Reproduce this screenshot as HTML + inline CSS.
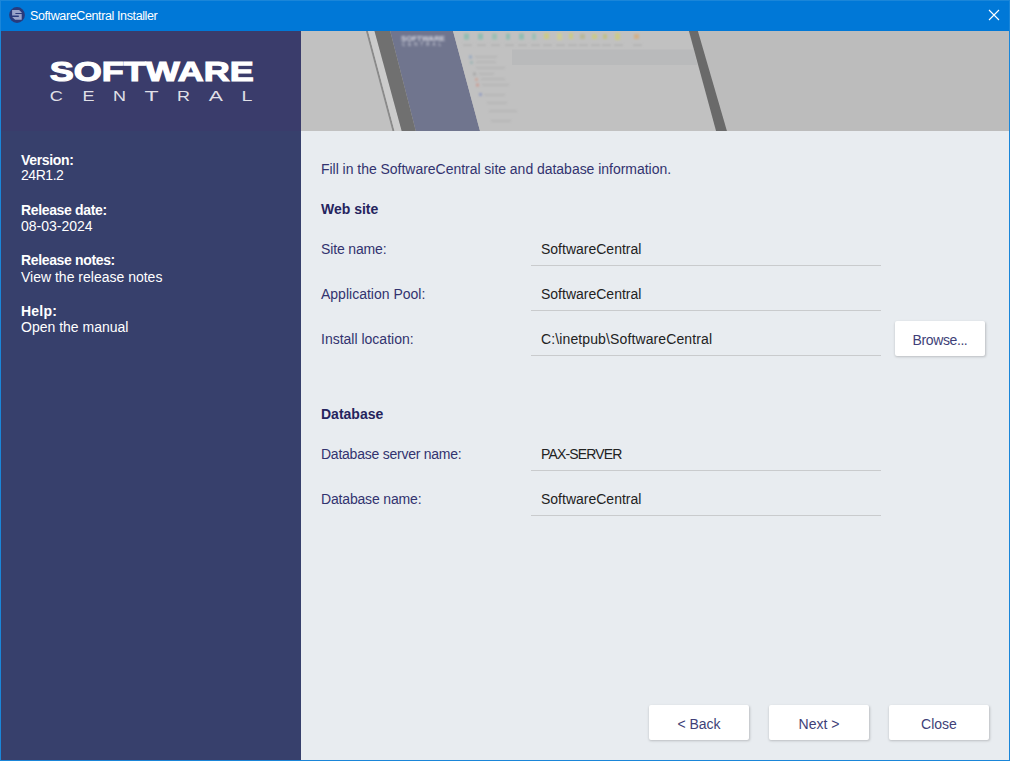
<!DOCTYPE html>
<html><head><meta charset="utf-8">
<style>
*{margin:0;padding:0;box-sizing:border-box}
html,body{width:1010px;height:761px;overflow:hidden;background:#e8ecf0}
body{position:relative;font-family:"Liberation Sans",sans-serif}
.abs{position:absolute;white-space:nowrap}
#title{position:absolute;left:0;top:0;width:1010px;height:31px;background:#0078d7}
#side{position:absolute;left:0;top:31px;width:301px;height:730px;background:#37406c}
#sidetop{position:absolute;left:0;top:31px;width:301px;height:100px;background:#3a3c6b}
#hdr{position:absolute;left:301px;top:31px;width:709px;height:100px;background:#bcbcbc;overflow:hidden}
#content{position:absolute;left:301px;top:131px;width:709px;height:630px;background:#e8ecf0}
.bl{font-size:14px;font-weight:bold;color:#fff;letter-spacing:-0.35px}
.vl{font-size:14px;color:#fff}
.lab{font-size:14px;color:#32336f}
.head{font-size:14px;font-weight:bold;color:#25245e}
.inp{font-size:14px;color:#222}
.ul{position:absolute;left:531px;width:350px;height:1px;background:#c9cbcd}
.btn{position:absolute;background:#fff;border-radius:2px;box-shadow:0.5px 1px 2.5px rgba(0,0,0,0.2);font-size:14px;color:#403f78;text-align:center;line-height:35px;height:35px;padding-top:1.5px}
#bord{position:absolute;left:0;top:0;width:1010px;height:761px;border:1px solid #1a86d9;pointer-events:none}
</style></head><body>
<div id="title"></div>
<svg class="abs" style="left:9px;top:7px" width="16" height="16" viewBox="0 0 16 16">
  <circle cx="8" cy="8" r="7.9" fill="#283a7c"/>
  <path d="M3.1,3 H10.1 L12.7,5.6 V5.9 H6.4 V6.9 H12.7 V12.7 H6.1 L3.1,10.1 H9.8 V8.5 H3.1 Z" fill="#98a3c9"/>
</svg>
<div class="abs" style="left:30px;top:9px;font-size:12.5px;letter-spacing:-0.38px;color:#fff">SoftwareCentral Installer</div>
<svg class="abs" style="left:988px;top:9px" width="12" height="12" viewBox="0 0 12 12">
  <path d="M1 1L11 11M11 1L1 11" stroke="#fff" stroke-width="1.1"/>
</svg>

<div id="side"></div>
<div id="sidetop"></div>
<svg class="abs" style="left:0;top:0" width="301" height="131" viewBox="0 0 301 131">
<text x="49.8" y="81.3" font-family="Liberation Sans" font-weight="bold" font-size="27" fill="#fff" stroke="#fff" stroke-width="1.1" stroke-linejoin="miter" textLength="204" lengthAdjust="spacingAndGlyphs">SOFTWARE</text>
<g font-family="Liberation Sans" font-size="14.2" fill="#fff" fill-opacity="0.85"><text x="49.8" y="100.5" textLength="13.1" lengthAdjust="spacingAndGlyphs">C</text><text x="82.5" y="100.5" textLength="12.0" lengthAdjust="spacingAndGlyphs">E</text><text x="113.0" y="100.5" textLength="13.0" lengthAdjust="spacingAndGlyphs">N</text><text x="144.6" y="100.5" textLength="14.1" lengthAdjust="spacingAndGlyphs">T</text><text x="177.0" y="100.5" textLength="13.0" lengthAdjust="spacingAndGlyphs">R</text><text x="208.8" y="100.5" textLength="14.2" lengthAdjust="spacingAndGlyphs">A</text><text x="241.5" y="100.5" textLength="10.9" lengthAdjust="spacingAndGlyphs">L</text></g>
</svg>
<div class="abs bl" style="left:21px;top:152px">Version:</div>
<div class="abs vl" style="left:21px;top:167px;letter-spacing:-0.45px">24R1.2</div>
<div class="abs bl" style="left:21px;top:202px">Release date:</div>
<div class="abs vl" style="left:21px;top:218px">08-03-2024</div>
<div class="abs bl" style="left:21px;top:251.5px">Release notes:</div>
<div class="abs vl" style="left:21px;top:269px">View the release notes</div>
<div class="abs bl" style="left:21px;top:302.5px;letter-spacing:0.2px">Help:</div>
<div class="abs vl" style="left:21px;top:318.5px">Open the manual</div>

<div id="hdr"><svg width="709" height="100" viewBox="0 0 709 100">
<defs><filter id="bl" x="-20%" y="-20%" width="140%" height="140%"><feGaussianBlur stdDeviation="1"/></filter>
<filter id="bl2" x="-5%" y="-5%" width="110%" height="110%"><feGaussianBlur stdDeviation="0.7"/></filter></defs>
<rect width="709" height="100" fill="#bcbcbc"/>
<g filter="url(#bl2)">
<polygon points="0,0 65,0 91.5,100 0,100" fill="#c1c1c1"/>
<polygon points="65,0 67,0 93.5,100 91.5,100" fill="#8a8a8a"/>
<polygon points="67,0 73.5,0 100.7,100 93.5,100" fill="#cbcbcb"/>
<polygon points="89.2,0 152,0 179,100 114.8,100" fill="#70748e"/>
<polygon points="73.5,0 89.2,0 114.8,100 100.7,100" fill="#6f6f6f"/>
<polygon points="152,0 387.4,0 415.6,100 179,100" fill="#c1c1c1"/>
<polygon points="211,18.5 392.5,18.5 396.5,34 211,34" fill="#b9babb"/>
<polygon points="387.4,-2 396.3,-2 426.5,102 415.6,102" fill="#6a6a6a"/>
</g>
<g filter="url(#bl)" opacity="1">
<rect x="163" y="2.5" width="5" height="6" fill="#93bdb2"/>
<rect x="177" y="2.5" width="5" height="6" fill="#93bdb2"/>
<rect x="191" y="2.5" width="5" height="6" fill="#9cbfb4"/>
<rect x="205" y="2.5" width="4" height="6" fill="#93bdb2"/>
<rect x="218" y="2.5" width="5" height="6" fill="#93bdb2"/>
<rect x="231" y="2.5" width="4" height="6" fill="#9cc0b6"/>
<rect x="243" y="2" width="5" height="6" fill="#c9c98a"/>
<rect x="256" y="2" width="5" height="7" fill="#cdcd98"/>
<rect x="268" y="2" width="4" height="6" fill="#c9c98a"/>
<rect x="279" y="3" width="5" height="5" fill="#b8b89a"/>
<rect x="291" y="3" width="5" height="5" fill="#c9c98a"/>
<rect x="302" y="3" width="4" height="5" fill="#c0c08a"/>
<rect x="314" y="2" width="5" height="7" fill="#c9c98a"/>
<rect x="333" y="3" width="5" height="5" fill="#d0b08a"/>
<rect x="162" y="13.5" width="9" height="1.2" fill="#adadad"/><rect x="176" y="13.5" width="9" height="1.2" fill="#adadad"/><rect x="190" y="13.5" width="9" height="1.2" fill="#adadad"/><rect x="204" y="13.5" width="9" height="1.2" fill="#adadad"/><rect x="217" y="13.5" width="9" height="1.2" fill="#adadad"/><rect x="230" y="13.5" width="9" height="1.2" fill="#adadad"/><rect x="242" y="13.5" width="9" height="1.2" fill="#adadad"/><rect x="255" y="13.5" width="9" height="1.2" fill="#adadad"/><rect x="267" y="13.5" width="9" height="1.2" fill="#adadad"/><rect x="278" y="13.5" width="9" height="1.2" fill="#adadad"/><rect x="290" y="13.5" width="9" height="1.2" fill="#adadad"/><rect x="301" y="13.5" width="9" height="1.2" fill="#adadad"/><rect x="313" y="13.5" width="9" height="1.2" fill="#adadad"/><rect x="332" y="13.5" width="9" height="1.2" fill="#adadad"/>
</g>
<g filter="url(#bl)" fill="#aaaaaa" opacity="0.6">
<rect x="168" y="24.5" width="3" height="3" fill="#7f9ac0"/><rect x="174" y="25" width="22" height="1.5"/>
<rect x="169" y="30" width="3" height="3" fill="#8fb0b0"/><rect x="175" y="30.5" width="20" height="1.5"/>
<rect x="175" y="36" width="29" height="1.5"/>
<rect x="172" y="41.5" width="3" height="3" fill="#999"/><rect x="178" y="42" width="15" height="1.5"/>
<rect x="174" y="47" width="3" height="3" fill="#d09a8a"/><rect x="180" y="47.5" width="24" height="1.5"/>
<rect x="175" y="52.5" width="3" height="3" fill="#d08a7a"/><rect x="181" y="53" width="27" height="1.5"/>
<rect x="178" y="62" width="3" height="3" fill="#7a8ac0"/><rect x="183" y="63" width="21" height="1.5"/>
<rect x="186" y="71" width="20" height="1.5"/>
<rect x="188" y="79.5" width="28" height="1.5"/>
<rect x="190" y="89" width="20" height="1.5"/>
</g>
<g filter="url(#bl)" fill="#d6d7e0">
<text x="100" y="9.6" font-family="Liberation Sans" font-weight="bold" font-size="8" textLength="44" lengthAdjust="spacingAndGlyphs">SOFTWARE</text>
<text x="101" y="14.8" font-family="Liberation Sans" font-size="4.5" textLength="42" lengthAdjust="spacing" letter-spacing="3">CENTRAL</text>
</g>
</svg></div>
<div id="content"></div>

<div class="abs lab" style="left:321px;top:161px;letter-spacing:-0.03px">Fill in the SoftwareCentral site and database information.</div>
<div class="abs head" style="left:321px;top:201px">Web site</div>
<div class="abs lab" style="left:321px;top:241px;letter-spacing:-0.15px">Site name:</div>
<div class="abs lab" style="left:321px;top:286px">Application Pool:</div>
<div class="abs lab" style="left:321px;top:331px">Install location:</div>
<div class="abs inp" style="left:541px;top:241px">SoftwareCentral</div>
<div class="abs inp" style="left:541px;top:286px">SoftwareCentral</div>
<div class="abs inp" style="left:541px;top:331px;letter-spacing:0.12px">C:\inetpub\SoftwareCentral</div>
<div class="ul" style="top:265px"></div>
<div class="ul" style="top:310px"></div>
<div class="ul" style="top:355px"></div>
<div class="btn" style="left:895px;top:321px;width:90px;letter-spacing:-0.4px">Browse...</div>

<div class="abs head" style="left:321px;top:406px">Database</div>
<div class="abs lab" style="left:321px;top:446px;letter-spacing:-0.24px">Database server name:</div>
<div class="abs lab" style="left:321px;top:491px;letter-spacing:-0.17px">Database name:</div>
<div class="abs inp" style="left:541px;top:446px;letter-spacing:-0.85px">PAX-SERVER</div>
<div class="abs inp" style="left:541px;top:491px">SoftwareCentral</div>
<div class="ul" style="top:470px"></div>
<div class="ul" style="top:515px"></div>

<div class="btn" style="left:649px;top:705px;width:100px">&lt; Back</div>
<div class="btn" style="left:769px;top:705px;width:100px">Next &gt;</div>
<div class="btn" style="left:889px;top:705px;width:100px">Close</div>

<div id="bord"></div>
</body></html>
